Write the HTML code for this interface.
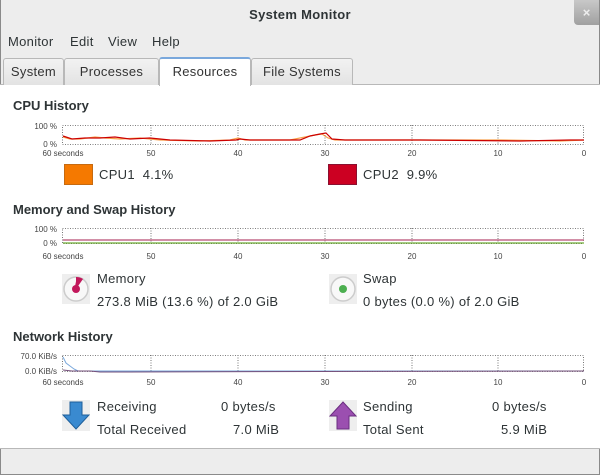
<!DOCTYPE html>
<html><head><style>
*{margin:0;padding:0;box-sizing:border-box}
body{width:600px;height:475px;overflow:hidden;font-family:"Liberation Sans",sans-serif;background:#ededed;position:relative;color:#2e3436}
.a{position:absolute;white-space:nowrap}
.win{position:absolute;left:0;top:0;width:600px;height:475px;border:1px solid #8a8a8a;border-top:none}
.tab{position:absolute;top:58px;height:27px;border:1px solid #b8b8b8;border-bottom:none;border-radius:3px 3px 0 0;background:linear-gradient(#f2f2f2,#e3e3e3);font-size:13px;text-align:center;line-height:25px;color:#333;letter-spacing:.3px}
.h{font-weight:bold;font-size:13px;color:#2e3436}
.t{font-size:13px;color:#2e3436;letter-spacing:.3px}
</style></head><body>
<div class="win"></div>
<div class="a" style="left:0;top:0;width:600px;height:30px;text-align:center;line-height:30px;font-weight:bold;font-size:13px;color:#2e3436;letter-spacing:.3px">System Monitor</div>
<div class="a" style="left:574px;top:0;width:25px;height:25px;background:linear-gradient(#c8c8c8,#a0a0a0);border-radius:0 0 0 4px;color:#eee;font-size:13px;text-align:center;line-height:25px;font-weight:bold">×</div>
<div class="a t" style="left:8px;top:34px">Monitor</div>
<div class="a t" style="left:70px;top:34px">Edit</div>
<div class="a t" style="left:108px;top:34px">View</div>
<div class="a t" style="left:152px;top:34px">Help</div>
<div class="a" style="left:0;top:84px;width:600px;height:365px;background:#fff;border-top:1px solid #b8b8b8;border-bottom:1px solid #b8b8b8"></div>
<div class="tab" style="left:3px;width:61px">System</div>
<div class="tab" style="left:64px;width:95px">Processes</div>
<div class="tab" style="left:251px;width:102px">File Systems</div>
<div class="tab" style="left:159px;width:92px;top:57px;height:29px;background:#fff;border-top:2px solid #7aa8dc">Resources</div>
<div class="a" style="left:1px;top:449px;width:598px;height:25px;background:#ededed"></div>

<div class="a h" style="left:13px;top:98px">CPU History</div>
<div class="a h" style="left:13px;top:202px">Memory and Swap History</div>
<div class="a h" style="left:13px;top:329px">Network History</div>

<svg class="a" style="left:0;top:0" width="600" height="475" font-family="Liberation Sans" font-size="8" fill="#444">
<g stroke="#555" stroke-width="0.8" stroke-dasharray="1,1.5" fill="none">
<rect x="62.5" y="125.5" width="521" height="19"/>
<rect x="62.5" y="228.5" width="521" height="15"/>
<rect x="62.5" y="355.5" width="521" height="16"/>
<path d="M151 125v19M238 125v19M325 125v19M412 125v19M498 125v19M151 228v15M238 228v15M325 228v15M412 228v15M498 228v15M151 355v16M238 355v16M325 355v16M412 355v16M498 355v16"/>
</g>
<g text-anchor="end"><text x="57" y="129">100 %</text><text x="57" y="147">0 %</text>
<text x="57" y="232">100 %</text><text x="57" y="246">0 %</text>
<text x="57" y="359">70.0 KiB/s</text><text x="57" y="374">0.0 KiB/s</text></g>
<g text-anchor="middle">
<g transform="translate(0,156)"><text x="63">60 seconds</text><text x="151">50</text><text x="238">40</text><text x="325">30</text><text x="412">20</text><text x="498">10</text><text x="584">0</text></g>
<g transform="translate(0,259)"><text x="63">60 seconds</text><text x="151">50</text><text x="238">40</text><text x="325">30</text><text x="412">20</text><text x="498">10</text><text x="584">0</text></g>
<g transform="translate(0,385)"><text x="63">60 seconds</text><text x="151">50</text><text x="238">40</text><text x="325">30</text><text x="412">20</text><text x="498">10</text><text x="584">0</text></g>
</g>
<polyline fill="none" stroke="#f57900" stroke-width="1.2" opacity=".7" points="63,137 70,139 80,139 95,137 105,138 120,139 140,138 160,140 200,141 230,140 238,138 245,140 290,140 305,137 315,135 322,134 328,138 335,140 400,140 500,140 560,141 584,140"/>
<polyline fill="none" stroke="#cc0000" stroke-width="1.2" points="63,136 72,139 85,138 100,138 115,137 130,139 150,138 170,140 210,141 236,140 240,139 250,140 300,140 310,136 320,134 326,133 332,139 345,140 420,140 520,141 570,140 584,140"/>
<line x1="63" y1="240" x2="584" y2="240" stroke="#c46a8a" stroke-width="1.5"/>
<line x1="63" y1="243" x2="584" y2="243" stroke="#4e9a06" stroke-width="1"/>
<polyline fill="none" stroke="#7aa8dc" stroke-width="1" points="63,357 66,363 70,366 74,369 78,371 584,371"/>
<polyline fill="none" stroke="#75507b" stroke-width="1" points="63,370 72,371 90,371 100,372 584,371"/>
</svg>

<div class="a" style="left:64px;top:164px;width:29px;height:21px;background:#f57900;border:1px solid #c66a10"></div>
<div class="a t" style="left:99px;top:167px">CPU1&nbsp; 4.1%</div>
<div class="a" style="left:328px;top:164px;width:29px;height:21px;background:#cc0022;border:1px solid #8a1030"></div>
<div class="a t" style="left:363px;top:167px">CPU2&nbsp; 9.9%</div>

<svg class="a" style="left:62px;top:274px" width="28" height="30"><rect width="28" height="30" fill="#eee"/><circle cx="14" cy="15" r="12" fill="#f8f8f8" stroke="#ccc" stroke-width="1.5"/><path d="M14 15 L14 3 A12 12 0 0 1 21 5 Z" fill="#c2185b"/><circle cx="14" cy="15" r="4" fill="#c2185b"/><line x1="14" y1="15" x2="16" y2="5" stroke="#c2185b" stroke-width="3"/></svg>
<div class="a t" style="left:97px;top:271px">Memory</div>
<div class="a t" style="left:97px;top:294px">273.8 MiB (13.6 %) of 2.0 GiB</div>
<svg class="a" style="left:329px;top:274px" width="28" height="30"><rect width="28" height="30" fill="#eee"/><circle cx="14" cy="15" r="12" fill="#f8f8f8" stroke="#ccc" stroke-width="1.5"/><circle cx="14" cy="15" r="4" fill="#4caf50"/></svg>
<div class="a t" style="left:363px;top:271px">Swap</div>
<div class="a t" style="left:363px;top:294px">0 bytes (0.0 %) of 2.0 GiB</div>

<svg class="a" style="left:62px;top:400px" width="28" height="31"><rect width="28" height="31" fill="#eee"/><path d="M8 2h12v13h7L14 29 1 15h7z" fill="#3a8ad0" stroke="#1f5f9a"/></svg>
<div class="a t" style="left:97px;top:399px">Receiving</div>
<div class="a t" style="left:221px;top:399px">0 bytes/s</div>
<div class="a t" style="left:97px;top:422px">Total Received</div>
<div class="a t" style="left:233px;top:422px">7.0 MiB</div>
<svg class="a" style="left:329px;top:400px" width="28" height="31"><rect width="28" height="31" fill="#eee"/><path d="M8 29h12V16h7L14 2 1 16h7z" fill="#9b4fb0" stroke="#6a2d80"/></svg>
<div class="a t" style="left:363px;top:399px">Sending</div>
<div class="a t" style="left:492px;top:399px">0 bytes/s</div>
<div class="a t" style="left:363px;top:422px">Total Sent</div>
<div class="a t" style="left:501px;top:422px">5.9 MiB</div>
</body></html>
